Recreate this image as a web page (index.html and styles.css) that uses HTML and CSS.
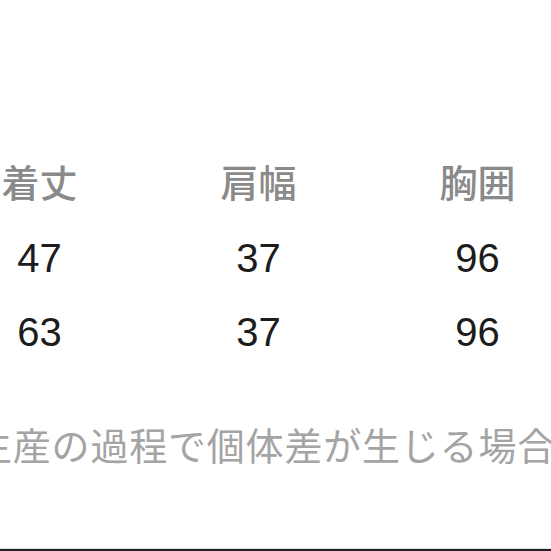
FILE: index.html
```html
<!DOCTYPE html>
<html lang="ja">
<head>
<meta charset="utf-8">
<link rel="stylesheet" href="styles.css">
</head>
<body>
<div class="page">
  <div class="table">
    <div class="cell head">着丈</div>
    <div class="cell head">肩幅</div>
    <div class="cell head">胸囲</div>
    <div class="cell num">47</div>
    <div class="cell num">37</div>
    <div class="cell num">96</div>
    <div class="cell num">63</div>
    <div class="cell num">37</div>
    <div class="cell num">96</div>
  </div>
  <p class="note">生産の過程で個体差が生じる場合</p>
  <div class="rule"></div>
</div>
</body>
</html>
```

FILE: styles.css
```css
html, body {
  margin: 0;
  padding: 0;
  background: #ffffff;
  overflow: hidden;
}
.page {
  width: 551px;
  height: 551px;
  display: flex;
  flex-direction: column;
  overflow: hidden;
}
.table {
  margin-top: 144px;
  margin-left: -70px;
  display: grid;
  grid-template-columns: repeat(3, 219px);
  grid-template-rows: 77px 74px 74px;
}
.cell {
  text-align: center;
  white-space: nowrap;
}
.head {
  font-family: "Noto Sans CJK JP", sans-serif;
  font-size: 38px;
  line-height: 74px;
  font-weight: 500;
  color: #8a8a8a;
}
.num {
  font-family: "Liberation Sans", Arial, sans-serif;
  font-size: 40px;
  line-height: 74px;
  color: #1c1c1c;
}
.note {
  margin: 50px 0 0 -26px;
  font-family: "Noto Sans CJK JP", sans-serif;
  font-size: 38px;
  line-height: 50px;
  letter-spacing: 0.8px;
  color: #a4a4a4;
  white-space: nowrap;
}
.rule {
  margin-top: auto;
  height: 2px;
  border-top: 1px solid #e0e0e0;
  background: #222222;
}
```
